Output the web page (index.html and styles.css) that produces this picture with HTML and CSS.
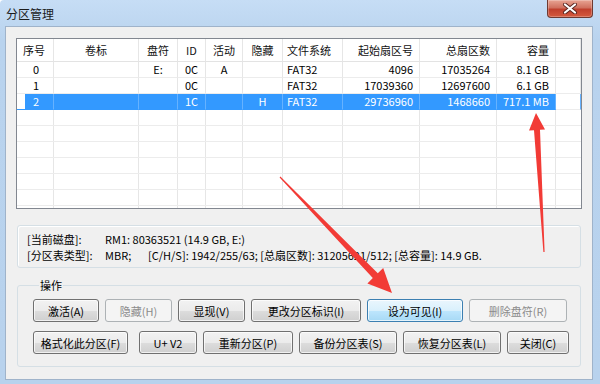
FILE: index.html
```html
<!DOCTYPE html>
<html lang="zh-CN">
<head>
    <meta charset="UTF-8">
    <title>分区管理</title>
    <link rel="stylesheet" href="styles.css">
</head>
<body>
    <div class="window">
        <div class="titlebar">
            <span class="title">分区管理</span>
            <div class="close">
                <svg width="16" height="11" viewBox="0 0 16 11">
                    <path d="M3 1.5 L13 9.5 M13 1.5 L3 9.5" stroke="#5a2620" stroke-width="4" stroke-linecap="round"/>
                    <path d="M3 1.5 L13 9.5 M13 1.5 L3 9.5" stroke="#fff" stroke-width="2.2" stroke-linecap="round"/>
                </svg>
            </div>
        </div>

        <div class="client">
            <div class="listview">
                <div class="grid head">
                    <div class="cell first">序号</div>
                    <div class="cell">卷标</div>
                    <div class="cell">盘符</div>
                    <div class="cell">ID</div>
                    <div class="cell">活动</div>
                    <div class="cell">隐藏</div>
                    <div class="cell left">文件系统</div>
                    <div class="cell right">起始扇区号</div>
                    <div class="cell right">总扇区数</div>
                    <div class="cell right">容量</div>
                    <div class="cell"></div>
                </div>
                <div class="grid row">
                    <div class="cell first">0</div><div class="cell"></div><div class="cell">E:</div><div class="cell">0C</div>
                    <div class="cell">A</div><div class="cell"></div><div class="cell left">FAT32</div>
                    <div class="cell right">4096</div><div class="cell right">17035264</div><div class="cell right">8.1 GB</div><div class="cell"></div>
                </div>
                <div class="grid row">
                    <div class="cell first">1</div><div class="cell"></div><div class="cell"></div><div class="cell">0C</div>
                    <div class="cell"></div><div class="cell"></div><div class="cell left">FAT32</div>
                    <div class="cell right">17039360</div><div class="cell right">12697600</div><div class="cell right">6.1 GB</div><div class="cell"></div>
                </div>
                <div class="grid row sel">
                    <div class="cell first">2</div><div class="cell"></div><div class="cell"></div><div class="cell">1C</div>
                    <div class="cell"></div><div class="cell">H</div><div class="cell left">FAT32</div>
                    <div class="cell right">29736960</div><div class="cell right">1468660</div><div class="cell right">717.1 MB</div><div class="cell"></div>
                </div>
                <div class="filler"></div>
            </div>

            <div class="info">
                <div class="info-line">
                    <span class="key">[当前磁盘]:</span>
                    <span>RM1: 80363521 (14.9 GB, E:)</span>
                </div>
                <div class="info-line">
                    <span class="key">[分区表类型]:</span>
                    <span class="mbr">MBR;</span>
                    <span>[C/H/S]: 1942/255/63; [总扇区数]: 31205621/512; [总容量]: 14.9 GB.</span>
                </div>
            </div>

            <fieldset class="ops">
                <legend>操作</legend>
                <div class="btn-row row1">
                    <button class="btn">激活(A)</button>
                    <button class="btn" disabled>隐藏(H)</button>
                    <button class="btn">显现(V)</button>
                    <button class="btn">更改分区标识(I)</button>
                    <button class="btn focus">设为可见(I)</button>
                    <button class="btn" disabled>删除盘符(R)</button>
                </div>
                <div class="btn-row row2">
                    <button class="btn">格式化此分区(F)</button>
                    <button class="btn">U+ V2</button>
                    <button class="btn">重新分区(P)</button>
                    <button class="btn">备份分区表(S)</button>
                    <button class="btn">恢复分区表(L)</button>
                    <button class="btn">关闭(C)</button>
                </div>
            </fieldset>
        </div>

        <!-- annotation arrows drawn over the dialog -->
        <svg class="marks" width="600" height="384" viewBox="0 0 600 384">
            <polygon points="280.4,176.6 377.8,273.3 383.2,268.1 392,293 367.4,283.4 372.8,278.1 279.6,177.4" fill="#f23b36"/>
            <polygon points="544.6,252 540,129.8 545,129.5 536,113 529,130.5 534,130.2 543.4,252" fill="#f23b36"/>
        </svg>
    </div>
</body>
</html>
```

FILE: styles.css
```css
* {
    box-sizing: border-box;
}

body {
    margin: 0;
    font-family: "Noto Sans CJK SC", sans-serif;
    font-size: 11px;
    color: #000;
}

.window {
    position: relative;
    width: 600px;
    height: 384px;
    display: flex;
    flex-direction: column;
    background: linear-gradient(#c6ddf5, #b9d3ee 40px, #b8d2ed);
    border-top-left-radius: 4px;
    overflow: hidden;
}

.titlebar {
    height: 26px;
    flex: none;
    display: flex;
    align-items: flex-start;
    padding-left: 6px;
}

.title {
    font-size: 12px;
    line-height: 28px;
    color: #1b1b1b;
}

.close {
    margin-left: auto;
    margin-right: 7px;
    width: 46px;
    height: 18px;
    display: flex;
    justify-content: center;
    align-items: center;
    border: 1px solid #6e3a32;
    border-top: none;
    border-radius: 0 0 4px 4px;
    background: linear-gradient(#e8a493, #d0715f 45%, #c0402d 55%, #d45a3e);
    box-shadow: inset 0 0 0 1px rgba(255, 255, 255, 0.25);
}

.client {
    flex: 1;
    margin: 0 7px 4px 5px;
    background: #f0f0f0;
    border: 1px solid #9fb3ca;
    padding: 11px 10px 0;
    display: flex;
    flex-direction: column;
}

/* list view: columns 37/85/39/28/37/40/60/77/77/59/rest */
.listview {
    height: 171px;
    flex: none;
    border: 1px solid #828790;
    background: #fff;
    overflow: hidden;
    display: flex;
    flex-direction: column;
}

.grid {
    display: grid;
    grid-template-columns: 37px 85px 39px 28px 37px 40px 60px 77px 77px 59px 1fr;
    flex: none;
}

.cell {
    text-align: center;
    white-space: nowrap;
    overflow: hidden;
    border-right: 1px solid #e6e6e6;
}

.head .cell {
    height: 23px;
    line-height: 22px;
    border-bottom: 1px solid #e3e3e3;
    color: #111;
}

.row .cell {
    height: 16px;
    line-height: 15px;
    border-bottom: 1px solid #ececec;
}

.head .first {
    text-align: left;
    padding-left: 6px;
}

.row .first {
    text-align: left;
    padding-left: 16px;
}

.cell.left {
    text-align: left;
    padding-left: 4px;
}

.cell.right {
    text-align: right;
    padding-right: 6px;
}

.row.sel .cell {
    background: #3399ff;
    color: #fff;
    border-right-color: #66b2ff;
    border-bottom-color: #3399ff;
}

.row.sel .first {
    background: linear-gradient(to right, #fff 8px, #3399ff 8px);
}

.row.sel .cell:last-child {
    background: #fff;
    border-bottom-color: #ececec;
}

/* empty area keeps the grid lines of the list */
.filler {
    flex: 1;
    background:
        repeating-linear-gradient(to bottom, transparent 0 15px, #ececec 15px 16px),
        linear-gradient(to right, transparent 36px, #e6e6e6 36px 37px, transparent 37px 121px, #e6e6e6 121px 122px,
            transparent 122px 160px, #e6e6e6 160px 161px, transparent 161px 188px, #e6e6e6 188px 189px,
            transparent 189px 225px, #e6e6e6 225px 226px, transparent 226px 265px, #e6e6e6 265px 266px,
            transparent 266px 325px, #e6e6e6 325px 326px, transparent 326px 402px, #e6e6e6 402px 403px,
            transparent 403px 479px, #e6e6e6 479px 480px, transparent 480px 538px, #e6e6e6 538px 539px, transparent 539px);
}

.info {
    margin: 16px 1px 0;
    height: 43px;
    flex: none;
    border: 1px solid #d5dfe5;
    border-radius: 3px;
    box-shadow: inset 1px 1px 0 #fff;
    padding: 5px 9px 0;
}

.info-line {
    display: flex;
    height: 16px;
    line-height: 16px;
    white-space: nowrap;
}

.info-line .key {
    width: 78px;
    flex: none;
}

.info-line .mbr {
    width: 43px;
    flex: none;
}

.ops {
    margin: 10px 1px 0;
    padding: 7px 0 12px 15px;
    border: 1px solid #d5dfe5;
    border-radius: 3px;
    min-width: 0;
}

.ops legend {
    padding: 0 1px;
    margin-left: 6px;
    line-height: 14px;
}

.btn-row {
    display: flex;
    gap: 6px;
}

.row1 {
    margin-bottom: 9px;
}

.btn {
    height: 23px;
    padding: 0;
    font: inherit;
    color: #000;
    border: 1px solid #707070;
    border-radius: 3px;
    background: linear-gradient(#f2f2f2, #ebebeb 50%, #dddddd 51%, #cfcfcf);
    box-shadow: inset 0 0 0 1px rgba(255, 255, 255, 0.7);
}

.btn:disabled {
    color: #8b8b8b;
    border-color: #adb2b5;
    background: #f4f4f4;
    box-shadow: none;
}

.btn.focus {
    border-color: #3c7fb1;
    background: linear-gradient(#eaf6fd, #d9f0fc 50%, #bee6fd 51%, #a7d9f5);
}

.row1 .btn:nth-child(1) { width: 66px; }
.row1 .btn:nth-child(2) { width: 67px; }
.row1 .btn:nth-child(3) { width: 67px; }
.row1 .btn:nth-child(4) { width: 110px; }
.row1 .btn:nth-child(5) { width: 96px; }
.row1 .btn:nth-child(6) { width: 98px; }

.row2 .btn:nth-child(1) { width: 95px; margin-right: 5px; }
.row2 .btn:nth-child(2) { width: 58px; }
.row2 .btn:nth-child(3) { width: 90px; }
.row2 .btn:nth-child(4) { width: 98px; }
.row2 .btn:nth-child(5) { width: 98px; }
.row2 .btn:nth-child(6) { width: 62px; }

.marks {
    position: absolute;
    top: 0;
    left: 0;
    pointer-events: none;
}
```
